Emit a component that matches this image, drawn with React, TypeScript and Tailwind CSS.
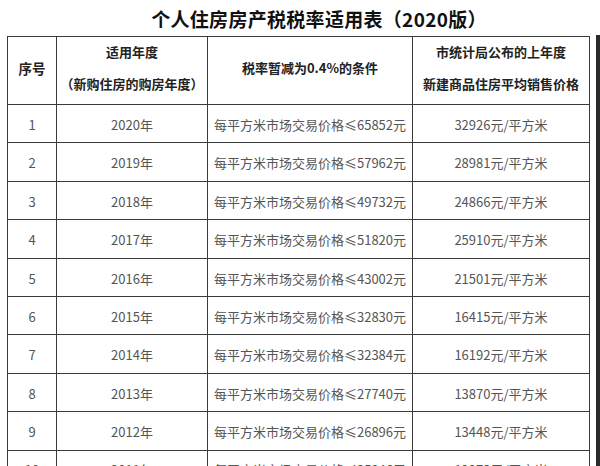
import React from "react";

const rows = [
  ["1", "2020年", "每平方米市场交易价格≤65852元", "32926元/平方米"],
  ["2", "2019年", "每平方米市场交易价格≤57962元", "28981元/平方米"],
  ["3", "2018年", "每平方米市场交易价格≤49732元", "24866元/平方米"],
  ["4", "2017年", "每平方米市场交易价格≤51820元", "25910元/平方米"],
  ["5", "2016年", "每平方米市场交易价格≤43002元", "21501元/平方米"],
  ["6", "2015年", "每平方米市场交易价格≤32830元", "16415元/平方米"],
  ["7", "2014年", "每平方米市场交易价格≤32384元", "16192元/平方米"],
  ["8", "2013年", "每平方米市场交易价格≤27740元", "13870元/平方米"],
  ["9", "2012年", "每平方米市场交易价格≤26896元", "13448元/平方米"],
  ["10", "2011年", "每平方米市场交易价格≤25946元", "12973元/平方米"],
];

const font = { fontFamily: '"Microsoft YaHei", "Noto Sans CJK SC", "Noto Sans", sans-serif' };

export default function App() {
  return (
    <div className="w-[600px] h-[466px] overflow-hidden bg-white relative" style={font}>
      <div className="h-[36px] flex items-center justify-center pl-[38px] text-[19px] font-bold text-[#111] leading-none tracking-[0.3px]">
        个人住房房产税税率适用表（2020版）
      </div>
      <div className="flex">
        <div className="ml-[7px] w-[583px] grid grid-cols-[49px_151px_205px_177px] grid-rows-[68px_repeat(10,38.4px)] border-l border-t border-[#3a3a3a]">
          <div className="border-r border-b border-[#3a3a3a] flex items-center justify-center pb-[5px] text-[13.5px] font-bold text-[#222]">
            序号
          </div>
          <div className="border-r border-b border-[#3a3a3a] flex flex-col items-center justify-center pb-[5px] text-[13px] font-bold text-[#222] leading-[32px]">
            <span>适用年度</span>
            <span>（新购住房的购房年度）</span>
          </div>
          <div className="border-r border-b border-[#3a3a3a] flex items-center justify-center pb-[5px] text-[13px] font-bold text-[#222]">
            税率暂减为0.4%的条件
          </div>
          <div className="border-r border-b border-[#3a3a3a] flex flex-col items-center justify-center pb-[5px] text-[13px] font-bold text-[#222] leading-[32px]">
            <span>市统计局公布的上年度</span>
            <span>新建商品住房平均销售价格</span>
          </div>
          {rows.map((r, i) => (
            <React.Fragment key={i}>
              {r.map((c, j) => (
                <div
                  key={j}
                  className="border-r border-b border-[#3a3a3a] flex items-center justify-center pt-[2px] text-[13px] text-[#555] whitespace-nowrap"
                >
                  {c}
                </div>
              ))}
            </React.Fragment>
          ))}
        </div>
        <div className="ml-[6px] w-[4px] bg-[#2a2a2a] self-stretch min-h-[440px] -mt-[1px]" />
      </div>
    </div>
  );
}
